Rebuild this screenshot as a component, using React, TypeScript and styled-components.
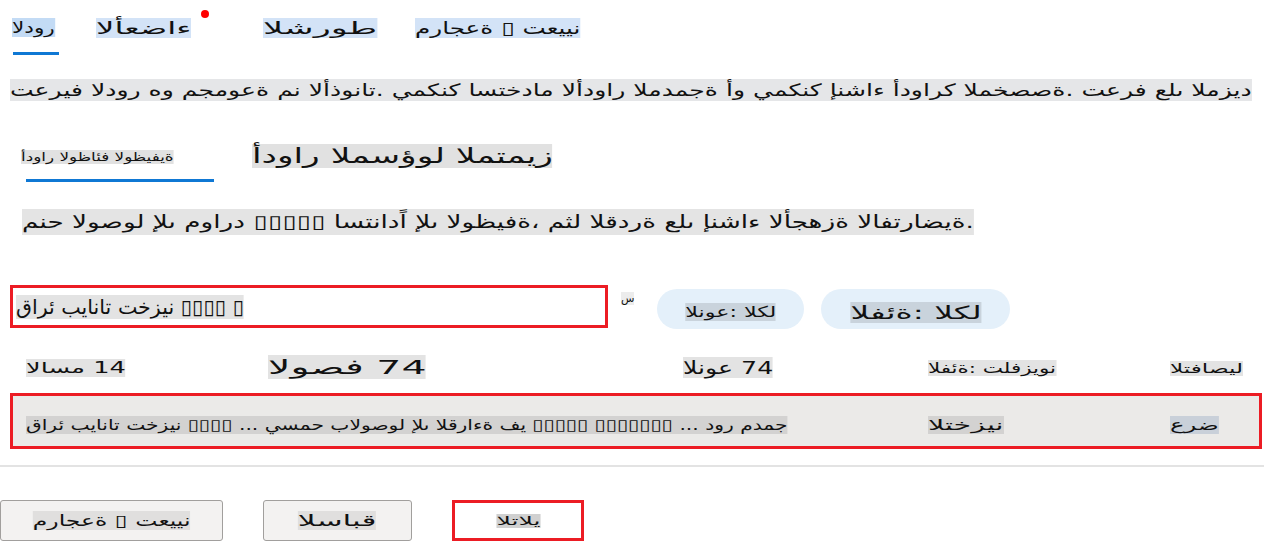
import React from "react";
import styled, { createGlobalStyle } from "styled-components";

const Global = createGlobalStyle`
  html, body { margin: 0; padding: 0; background: #ffffff; }
  body { font-family: "DejaVu Sans", "Noto Sans", sans-serif; color: #111; }
`;

const Page = styled.div`
  width: 1264px;
  height: 541px;
  overflow: hidden;
  display: flex;
  flex-direction: column;
  unicode-bidi: bidi-override;
  direction: ltr;
`;

/* Highlighted text run, laid out strictly left to right; $sx widens the glyphs to the reference's wide face */
const Hl = styled.span<{ $bg?: string; $size?: number; $sx?: number; $center?: boolean }>`
  display: inline-block;
  background: ${(p) => p.$bg ?? "#e3e3e3"};
  font-size: ${(p) => p.$size ?? 16}px;
  white-space: nowrap;
  unicode-bidi: bidi-override;
  direction: ltr;
  transform: scaleX(${(p) => p.$sx ?? 1});
  transform-origin: ${(p) => (p.$center ? "center" : "left")} center;
`;

const TopTabs = styled.nav`
  display: flex;
  align-items: flex-start;
  height: 70px;
  padding: 18px 0 0 12px;
  box-sizing: border-box;
`;

const Tab = styled.div<{ $w: number }>`
  position: relative;
  width: ${(p) => p.$w}px;
  display: flex;
  flex-direction: column;
  align-items: flex-start;
  gap: 15px;
`;

const TabLine = styled.div`
  width: 46px;
  height: 3px;
  margin-left: 1px;
  background: #0f78d4;
`;

const Dot = styled.span`
  position: absolute;
  left: 105px;
  top: -8px;
  width: 8px;
  height: 8px;
  border-radius: 50%;
  background: #f00;
`;

const Intro = styled.p`
  margin: 9px 0 0 10px;
  line-height: 22px;
`;

const SubTabs = styled.div`
  display: flex;
  align-items: flex-start;
  margin-top: 42px;
  padding-left: 21px;
`;

const SubTab = styled.div<{ $w: number; $pt?: number }>`
  width: ${(p) => p.$w}px;
  padding-top: ${(p) => p.$pt ?? 0}px;
  display: flex;
  flex-direction: column;
  align-items: flex-start;
`;

const SubLine = styled.div`
  width: 188px;
  height: 3px;
  margin: 15px 0 0 5px;
  background: #0f78d4;
`;

const Desc = styled.p`
  margin: 27px 0 0 22px;
  line-height: 26px;
`;

const FilterBar = styled.div`
  display: flex;
  align-items: flex-start;
  margin-top: 49px;
  padding-left: 10px;
`;

const Search = styled.div`
  width: 598px;
  height: 43px;
  box-sizing: border-box;
  border: 3px solid #ec1c24;
  display: flex;
  align-items: center;
  padding-left: 3px;
`;

const Tiny = styled.span`
  margin: 7px 0 0 13px;
  font-size: 11px;
  background: #ececec;
`;

const Pill = styled.div<{ $w: number; $ml: number }>`
  width: ${(p) => p.$w}px;
  height: 40px;
  margin: 4px 0 0 ${(p) => p.$ml}px;
  border-radius: 20px;
  background: #e4f0fa;
  display: flex;
  align-items: center;
  justify-content: center;
  padding-top: 6px;
  box-sizing: border-box;
`;

const Grid = styled.div`
  display: grid;
  grid-template-columns: 242px 415px 245px 242px 1fr;
  align-items: center;
`;

const HeadRow = styled(Grid)`
  margin-top: 22px;
  padding-left: 26px;
  height: 32px;
`;

const DataRow = styled(Grid)`
  margin: 10px 2px 0 10px;
  height: 56px;
  box-sizing: border-box;
  border: 3px solid #ec1c24;
  background: #ebeae8;
  padding-left: 13px;
  padding-top: 6px;
`;

const Wide = styled.div`
  grid-column: 1 / span 3;
`;

const Sep = styled.div`
  margin-top: 16px;
  height: 2px;
  background: #e3e3e3;
`;

const Footer = styled.div`
  display: flex;
  align-items: flex-start;
  margin-top: 33px;
  gap: 40px;
`;

const Btn = styled.button<{ $w: number; $next?: boolean }>`
  width: ${(p) => p.$w}px;
  height: 41px;
  box-sizing: border-box;
  font-family: inherit;
  color: #111;
  border-radius: ${(p) => (p.$next ? 0 : 3)}px;
  border: ${(p) => (p.$next ? "3px solid #ec1c24" : "1px solid #a19f9d")};
  background: ${(p) => (p.$next ? "#fff" : "#f3f2f1")};
  display: flex;
  align-items: center;
  justify-content: center;
  padding: 0;
`;

const T = "▯";

export default function App() {
  return (
    <Page>
      <Global />
      <TopTabs>
        <Tab $w={84}>
          <Hl $bg="#c3dbf5" $size={16} $sx={1.35}>الدور</Hl>
          <TabLine />
        </Tab>
        <Tab $w={167}>
          <Hl $bg="#d3e3f7" $size={17} $sx={1.9}>الأعضاء</Hl>
          <Dot />
        </Tab>
        <Tab $w={152}>
          <Hl $bg="#d3e3f7" $size={17} $sx={2.08}>الشروط</Hl>
        </Tab>
        <Tab $w={200}>
          <Hl $bg="#d3e3f7" $size={17} $sx={1.45}>مراجعة {T} تعيين</Hl>
        </Tab>
      </TopTabs>
      <Intro>
        <Hl $bg="#e5e6e8" $size={17} $sx={1.475}>
          تعريف الدور هو مجموعة من الأذونات. يمكنك استخدام الأدوار المدمجة أو يمكنك إنشاء أدوارك المخصصة. تعرف على المزيد
        </Hl>
      </Intro>
      <SubTabs>
        <SubTab $w={231} $pt={6}>
          <Hl $bg="#e1e1e1" $size={12} $sx={1.4}>أدوار الوظائف الوظيفية</Hl>
          <SubLine />
        </SubTab>
        <SubTab $w={320}>
          <Hl $bg="#e1e1e1" $size={21} $sx={1.64}>أدوار المسؤول المتميز</Hl>
        </SubTab>
      </SubTabs>
      <Desc>
        <Hl $bg="#e4e4e4" $size={18} $sx={1.46}>
          منح الوصول إلى موارد {T}{T}{T}{T}{T} استناداً إلى الوظيفة، مثل القدرة على إنشاء الأجهزة الافتراضية.
        </Hl>
      </Desc>
      <FilterBar>
        <Search>
          <Hl $bg="#e3e3e3" $size={20} $sx={1.03}>قارئ بيانات تخزين {T}{T}{T}{T} {T}</Hl>
        </Search>
        <Tiny>س</Tiny>
        <Pill $w={147} $ml={23}>
          <Hl $bg="#c9d3dc" $size={15} $sx={1.48} $center>النوع: الكل</Hl>
        </Pill>
        <Pill $w={189} $ml={17}>
          <Hl $bg="#c9d3dc" $size={18} $sx={1.82} $center>الفئة: الكل</Hl>
        </Pill>
      </FilterBar>
      <HeadRow>
        <div><Hl $bg="#e3e3e3" $size={15} $sx={1.71}>الاسم 14</Hl></div>
        <div><Hl $bg="#e3e3e3" $size={20} $sx={1.97}>الوصف 74</Hl></div>
        <div><Hl $bg="#e3e3e3" $size={18} $sx={1.4}>النوع 74</Hl></div>
        <div><Hl $bg="#e3e3e3" $size={14} $sx={1.53}>الفئة: تلفزيون</Hl></div>
        <div><Hl $bg="#e3e3e3" $size={13} $sx={1.78}>التفاصيل</Hl></div>
      </HeadRow>
      <DataRow>
        <Wide>
          <Hl $bg="#d3d2d1" $size={15} $sx={1.35}>
            قارئ بيانات تخزين {T}{T}{T}{T} ... يسمح بالوصول إلى القراءة في {T}{T}{T}{T}{T} {T}{T}{T}{T}{T}{T}{T} ... دور مدمج
          </Hl>
        </Wide>
        <div><Hl $bg="#d3d2d1" $size={15} $sx={1.9}>التخزين</Hl></div>
        <div><Hl $bg="#c9d0d9" $size={15} $sx={1.63}>عرض</Hl></div>
      </DataRow>
      <Sep />
      <Footer>
        <Btn $w={223}>
          <Hl $bg="#e0dfde" $size={16} $sx={1.47} $center>مراجعة {T} تعيين</Hl>
        </Btn>
        <Btn $w={149}>
          <Hl $bg="#e0dfde" $size={16} $sx={1.95} $center>السابق</Hl>
        </Btn>
        <Btn $w={132} $next>
          <Hl $bg="#d0d0d0" $size={12} $sx={2.1} $center>التالي</Hl>
        </Btn>
      </Footer>
    </Page>
  );
}
